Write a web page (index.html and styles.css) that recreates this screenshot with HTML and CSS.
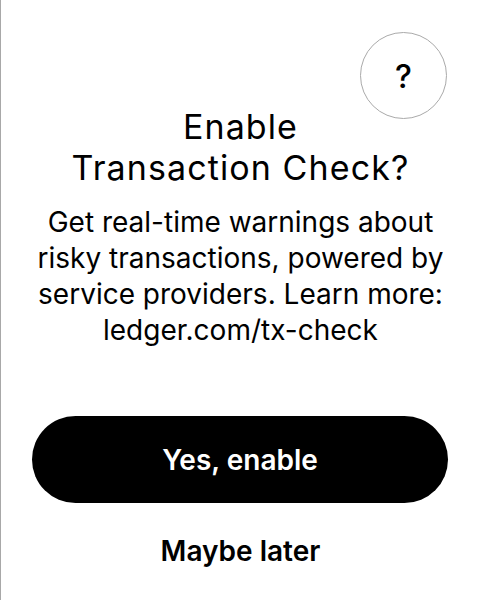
FILE: index.html
```html
<!DOCTYPE html>
<html>
<head>
<meta charset="utf-8">
<link rel="stylesheet" href="styles.css">
</head>
<body>
<div class="screen">
  <div class="help">?</div>
  <h1 class="title">Enable<br>Transaction Check?</h1>
  <p class="desc">Get real-time warnings about risky transactions, powered by service providers. Learn more: ledger.com/tx-check</p>
  <div class="actions">
    <button class="primary">Yes, enable</button>
    <button class="secondary">Maybe later</button>
  </div>
</div>
</body>
</html>
```
FILE: styles.css
```css
html, body {
  margin: 0;
  padding: 0;
  background: #fff;
}
.screen {
  position: relative;
  width: 480px;
  height: 600px;
  box-sizing: border-box;
  border-left: 1px solid #a8a8a8;
  padding-bottom: 32px;
  font-family: Inter, "Noto Sans", sans-serif;
  color: #000;
  display: flex;
  flex-direction: column;
  align-items: center;
}
.help {
  position: absolute;
  top: 32px;
  left: 359px;
  width: 87px;
  height: 87px;
  box-sizing: border-box;
  border: 1px solid #aaaaaa;
  border-radius: 50%;
  display: flex;
  align-items: center;
  justify-content: center;
  padding-top: 2px;
  font-size: 32px;
  line-height: 1;
  font-weight: 500;
}
.title {
  margin: 106px 0 0;
  font-size: 34px;
  line-height: 41px;
  font-weight: 400;
  letter-spacing: 1.1px;
  text-align: center;
}
.desc {
  margin: 16px 0 0;
  width: 420px;
  font-size: 28px;
  line-height: 36px;
  text-align: center;
}
.actions {
  margin-top: auto;
  display: flex;
  flex-direction: column;
  align-items: center;
  width: 100%;
}
.primary {
  width: 416px;
  height: 87px;
  margin-left: -1px;
  padding: 0;
  border: none;
  border-radius: 44px;
  background: #000;
  color: #fff;
  font-family: inherit;
  font-size: 28px;
  font-weight: 600;
}
.secondary {
  margin: 31px 0 0;
  padding: 0;
  background: none;
  border: none;
  color: #000;
  font-family: inherit;
  font-size: 28px;
  line-height: 34px;
  font-weight: 600;
}
```
